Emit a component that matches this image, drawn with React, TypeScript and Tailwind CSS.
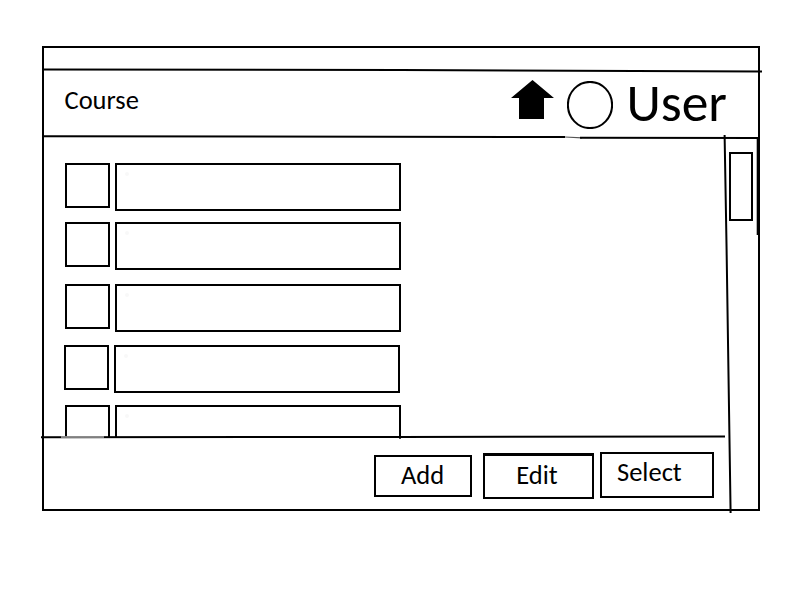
const rows = [
  'pt-0',
  'pt-[11px]',
  'pt-[14px]',
  'pt-[13px] -ml-px',
  'pt-3',
];

function Strokes() {
  return (
    <svg className="pointer-events-none absolute inset-0" width="800" height="600" fill="none" stroke="#000" strokeWidth="2">
      <path d="M43 69.5 L400 70 L762 71.6" />
      <path d="M43 136.2 L565 137" />
      <path d="M565 137 L582 137.8" strokeWidth="1.2" stroke="#555" />
      <path d="M580 137.8 L759 138" />
      <path d="M724.6 135 L726.6 250 L730.6 513" />
      <path d="M41 437.3 L400 437 L725 436.4" />
      <path d="M61 437 H104" stroke="#aaa" strokeWidth="1.5" />
      <path d="M400 436 V438.7" />
      <path d="M757.7 138 V235" />
    </svg>
  );
}

function Header() {
  return (
    <header className="flex h-[67px] items-start">
      <h1 className="ml-[20.5px] mt-3 w-[446.5px] text-[26.5px] leading-[36px]">Course</h1>
      <svg className="mt-[10px]" width="43" height="39" viewBox="0 0 43 39">
        <path d="M21.5 0 L43 18 H33 V39 H8 V18 H0 Z" />
      </svg>
      <svg className="ml-[13px] mt-[11px]" width="46" height="48" viewBox="0 0 46 48" fill="none" stroke="#000" strokeWidth="2">
        <ellipse cx="23" cy="24" rx="22.1" ry="23.1" />
      </svg>
      <span className="ml-[13.5px] mt-[3px] text-[53.5px] leading-[59px]">User</span>
    </header>
  );
}

export default function App() {
  return (
    <div className="relative h-[600px] w-[800px] overflow-hidden bg-white pl-[42px] pt-[46px] font-[Carlito,Lato,sans-serif] text-black">
      <main className="flex h-[465px] w-[718px] flex-col border-2 border-black">
        <div className="h-[22px]" />
        <Header />
        <div className="flex flex-1">
          <div className="flex w-[682px] flex-col">
            <ul className="h-[301px] overflow-hidden pl-[21px] pt-[26px]">
              {rows.map((row, i) => (
                <li key={i} className={`flex gap-[5px] ${row}`}>
                  <div className="size-[45px] border-2 border-black" />
                  <div className="h-12 w-[286px] border-2 border-black pl-2 pt-[7px]">
                    <div className="h-1 w-1 rounded-full bg-[#f8f8f8]" />
                  </div>
                </li>
              ))}
            </ul>
            <footer className="flex items-start pl-[330px] pt-3.5 text-[26.5px]">
              <button className="mt-[3px] h-[42px] w-[98px] border-2 border-black pb-0.5 pr-px leading-[36px]">Add</button>
              <button className="ml-[11px] mt-px h-[46px] w-[111px] border-2 border-t-[3px] border-black pb-0.5 pr-[3px] leading-[39px]">Edit</button>
              <button className="ml-1.5 h-[46px] w-[114px] border-2 border-black pb-1.5 pl-[15px] text-left leading-[36px]">Select</button>
            </footer>
          </div>
          <aside className="pl-[3px] pt-[15px]">
            <div className="h-[69px] w-6 border-2 border-black" />
          </aside>
        </div>
      </main>
      <Strokes />
    </div>
  );
}
